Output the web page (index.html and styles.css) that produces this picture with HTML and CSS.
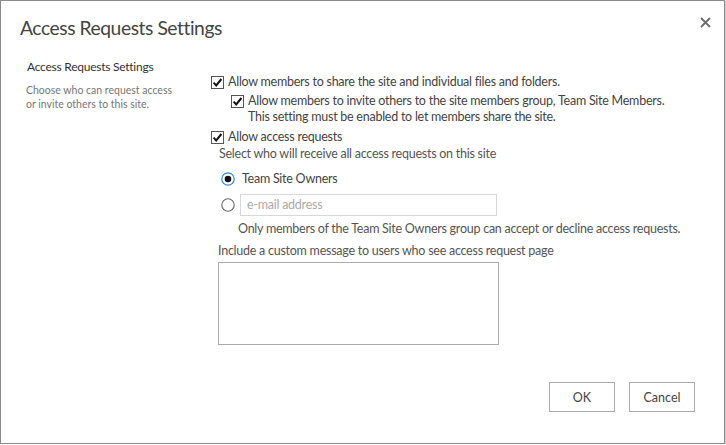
FILE: index.html
```html
<!DOCTYPE html>
<html>
<head>
<meta charset="utf-8">
<link rel="stylesheet" href="styles.css">
</head>
<body>
<div class="dialog">
  <div class="header">
    <h1 class="title">Access Requests Settings</h1>
    <button class="close" aria-label="Close">
      <svg width="11" height="11" viewBox="0 0 11 11"><path d="M1 1 L10 10 M10 1 L1 10" stroke="#6b6b6b" stroke-width="1.8" fill="none"/></svg>
    </button>
  </div>
  <div class="content">
    <div class="side">
      <div class="side-title">Access Requests Settings</div>
      <div class="side-desc">Choose who can request access or invite others to this site.</div>
    </div>
    <div class="main">
      <div class="row row1">
        <span class="cb"><svg width="13" height="13" viewBox="0 0 13 13"><rect x="0.5" y="0.5" width="12" height="12" fill="#fff" stroke="#555"/><path d="M2.6 6.6 L5.2 9.4 L10.4 3" stroke="#111" stroke-width="2" fill="none"/></svg></span>
        <span class="lbl">Allow members to share the site and individual files and folders.</span>
      </div>
      <div class="row row2">
        <span class="cb"><svg width="13" height="13" viewBox="0 0 13 13"><rect x="0.5" y="0.5" width="12" height="12" fill="#fff" stroke="#555"/><path d="M2.6 6.6 L5.2 9.4 L10.4 3" stroke="#111" stroke-width="2" fill="none"/></svg></span>
        <span class="lbl">Allow members to invite others to the site members group, Team Site Members.<br>This setting must be enabled to let members share the site.</span>
      </div>
      <div class="row row3">
        <span class="cb"><svg width="13" height="13" viewBox="0 0 13 13"><rect x="0.5" y="0.5" width="12" height="12" fill="#fff" stroke="#555"/><path d="M2.6 6.6 L5.2 9.4 L10.4 3" stroke="#111" stroke-width="2" fill="none"/></svg></span>
        <span class="lbl">Allow access requests</span>
      </div>
      <div class="text select">Select who will receive all access requests on this site</div>
      <div class="radio-row r1">
        <span class="radio on"><svg width="14" height="14" viewBox="0 0 14 14"><circle cx="7" cy="7" r="6.2" fill="#fff" stroke="#2b8ad8" stroke-width="1.2"/><circle cx="7" cy="7" r="3.3" fill="#111"/></svg></span>
        <span class="lbl">Team Site Owners</span>
      </div>
      <div class="radio-row r2">
        <span class="radio"><svg width="14" height="14" viewBox="0 0 14 14"><circle cx="7" cy="7" r="6.2" fill="#fff" stroke="#6a6a6a" stroke-width="1.1"/></svg></span>
        <div class="email">e-mail address</div>
      </div>
      <div class="text only">Only members of the Team Site Owners group can accept or decline access requests.</div>
      <div class="text include">Include a custom message to users who see access request page</div>
      <div class="textarea"></div>
    </div>
  </div>
  <div class="footer">
    <button class="btn">OK</button>
    <button class="btn">Cancel</button>
  </div>
</div>
</body>
</html>
```

FILE: styles.css
```css
html, body {
  margin: 0;
  padding: 0;
  background: #fff;
}
body {
  font-family: "Lato", "Open Sans", "Liberation Sans", sans-serif;
  color: #444;
}
.dialog {
  box-sizing: border-box;
  width: 725px;
  height: 444px;
  border: 1px solid #8a8a8a;
  box-shadow: 1px 1px 0 #cfcfcf;
  background: #fff;
  display: flex;
  flex-direction: column;
}
.header {
  display: flex;
  justify-content: space-between;
  align-items: flex-start;
  padding: 13px 13px 0 19px;
}
.title {
  margin: 0;
  font-weight: 400;
  font-size: 19.3px;
  letter-spacing: -0.45px;
  line-height: 28px;
  color: #444;
}
.close {
  border: 0;
  background: none;
  padding: 0;
  margin-top: 3px;
  width: 11px;
  height: 11px;
  display: flex;
}
.content {
  display: flex;
  padding-top: 17px;
}
.side {
  width: 185px;
  padding-left: 25px;
  flex: none;
}
.side-title {
  font-size: 12px;
  letter-spacing: -0.25px;
  line-height: 16px;
  color: #333;
  padding-left: 1px;
}
.side-desc {
  font-size: 10.5px;
  line-height: 14px;
  color: #777;
  margin-top: 8px;
  width: 150px;
}
.main {
  display: flex;
  flex-direction: column;
  align-items: flex-start;
  font-size: 12.5px;
  letter-spacing: -0.25px;
  line-height: 16px;
}
.row {
  display: flex;
  align-items: flex-start;
}
.cb {
  display: flex;
  width: 13px;
  height: 13px;
  margin-top: 2px;
  margin-right: 4px;
}
.row1 { margin-top: 15px; }
.row2 { margin-top: 3px; margin-left: 20px; }
.row3 { margin-top: 4px; }
.text { color: #555; }
.select { margin-top: 1px; margin-left: 8px; }
.radio-row {
  display: flex;
  align-items: center;
  margin-left: 10px;
}
.radio { display: flex; width: 14px; height: 14px; margin-right: 6px; }
.r1 { margin-top: 7px; height: 20px; }
.r1 .lbl { margin-left: 1px; }
.r2 { margin-top: 5px; height: 22px; }
.r2 .radio { margin-right: 5px; }
.email {
  box-sizing: border-box;
  width: 257px;
  height: 22px;
  border: 1px solid #d8d8d8;
  color: #aaa;
  padding: 2px 6px;
  line-height: 16px;
}
.only { margin-top: 5px; margin-left: 27px; }
.include { margin-top: 6px; margin-left: 7px; }
.textarea {
  box-sizing: border-box;
  margin-top: 3px;
  margin-left: 7px;
  width: 281px;
  height: 83px;
  border: 1px solid #ababab;
}
.footer {
  display: flex;
  justify-content: flex-end;
  gap: 14px;
  padding-right: 29px;
  margin-top: 37px;
}
.btn {
  box-sizing: border-box;
  width: 66px;
  height: 30px;
  border: 1px solid #ababab;
  background: #fff;
  font-family: inherit;
  font-size: 12.5px;
  color: #444;
  padding: 0;
}
```
